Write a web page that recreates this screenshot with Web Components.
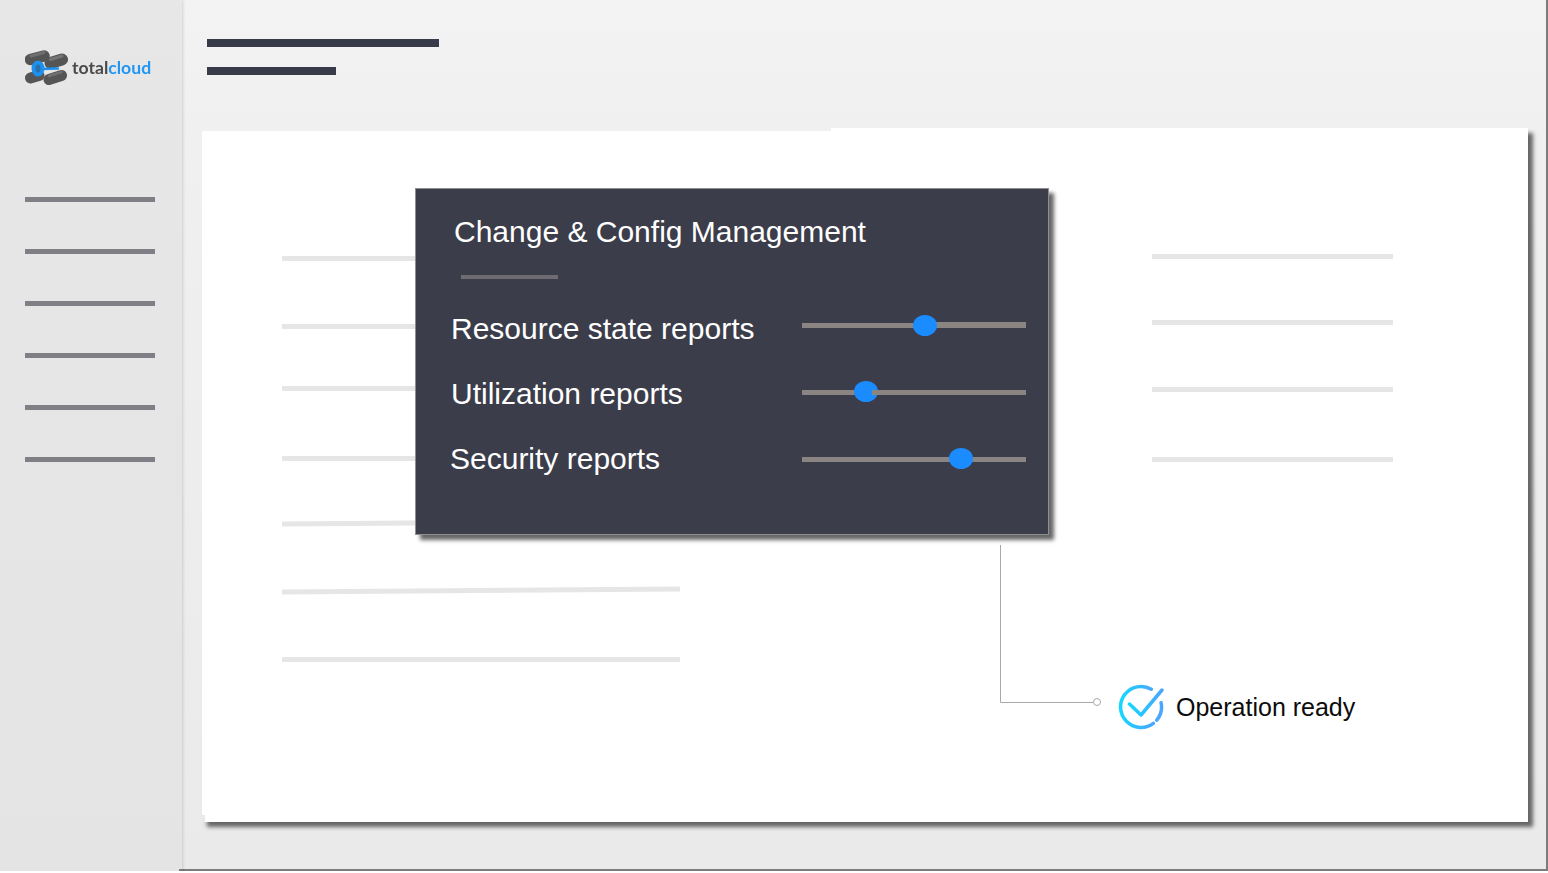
<!DOCTYPE html>
<html lang="en">
<head>
<meta charset="utf-8">
<title>totalcloud</title>
<style>
  html, body { margin: 0; padding: 0; background: #fff; }
  body { font-family: "Liberation Sans", sans-serif; overflow: hidden; }
</style>
</head>
<body>
<tc-app>
  <tc-sidebar slot="sidebar">
    <tc-logo></tc-logo>
  </tc-sidebar>
  <tc-header slot="header"></tc-header>
  <tc-card slot="card">
    <tc-line slot="left" style="margin-top:128px;--len:398px;--h:5px"></tc-line>
    <tc-line slot="left" style="margin-top:63px;--len:398px;--h:5px"></tc-line>
    <tc-line slot="left" style="margin-top:57px;--len:398px;--h:5px"></tc-line>
    <tc-line slot="left" style="margin-top:65px;--len:398px;--h:5px"></tc-line>
    <tc-line slot="left" style="margin-top:59px;--len:398px;--h:5px;--tilt:-.45deg"></tc-line>
    <tc-line slot="left" style="margin-top:63px;--len:398px;--h:5px;--tilt:-.45deg"></tc-line>
    <tc-line slot="left" style="margin-top:64px;--len:398px;--h:5px"></tc-line>
    <tc-line slot="right" style="margin-top:126px;--len:241px;--h:5px"></tc-line>
    <tc-line slot="right" style="margin-top:61px;--len:241px;--h:5px"></tc-line>
    <tc-line slot="right" style="margin-top:62px;--len:241px;--h:5px"></tc-line>
    <tc-line slot="right" style="margin-top:65px;--len:241px;--h:5px"></tc-line>
    <tc-status slot="right" style="margin-top:222px;margin-left:-34px">Operation ready</tc-status>
    <tc-panel slot="overlay" heading="Change &amp; Config Management">
      <tc-slider value="55" step="-1" kink="124" style="--track-top:14px;--knob-top:-8px">Resource state reports</tc-slider>
      <tc-slider value="28.9" step="0" kink="70" style="--track-top:16px;--knob-top:-9px">Utilization reports</tc-slider>
      <tc-slider value="71" style="--track-top:18px;--knob-top:-9px;--label-x:-1px">Security reports</tc-slider>
    </tc-panel>
    <tc-connector slot="overlay"></tc-connector>
  </tc-card>
</tc-app>

<script>
// page shell: sidebar on the left, header and card on the right
class TcApp extends HTMLElement {
  constructor() {
    super();
    this.attachShadow({ mode: "open" }).innerHTML = `
      <style>
        :host { display: flex; width: 1548px; height: 871px; }
        .main {
          flex: 1;
          display: flex;
          flex-direction: column;
          background: linear-gradient(#f3f3f3, #f0f0f0 15%, #eaeaea);
          border-right: 2px solid #7c7c7c;
          border-bottom: 2px solid #7c7c7c;
          padding-left: 20px;
          padding-right: 18px;
          box-sizing: border-box;
        }
      </style>
      <slot name="sidebar"></slot>
      <div class="main">
        <slot name="header"></slot>
        <slot name="card"></slot>
      </div>`;
  }
}

class TcSidebar extends HTMLElement {
  constructor() {
    super();
    let bars = "";
    for (let i = 0; i < 6; i++) bars += `<div class="bar"></div>`;
    this.attachShadow({ mode: "open" }).innerHTML = `
      <style>
        :host {
          display: block;
          flex: none;
          width: 182px;
          height: 873px;
          box-sizing: border-box;
          padding: 48px 0 0 25px;
          background: linear-gradient(#e7e7e7, #e4e4e4);
          box-shadow: 1px 0 3px rgba(0,0,0,.14);
          position: relative;
        }
        /* page's bottom rule starts a little inside the sidebar */
        :host::after {
          content: "";
          position: absolute;
          left: 179px;
          top: 869px;
          width: 3px;
          height: 2px;
          background: #7c7c7c;
        }
        .bars { display: flex; flex-direction: column; gap: 47px; margin-top: 111px; }
        .bar { width: 130px; height: 5px; background: #7f7f85; }
      </style>
      <slot></slot>
      <div class="bars">${bars}</div>`;
  }
}

// logo mark is four grey rods with a blue pipe through the middle
class TcLogo extends HTMLElement {
  constructor() {
    super();
    this.attachShadow({ mode: "open" }).innerHTML = `
      <style>
        :host { display: flex; align-items: center; height: 38px; gap: 4px; }
        svg { display: block; flex: none; filter: blur(.6px); }
        span {
          font: 700 17.6px/1 "Lato", "Open Sans", sans-serif;
          color: #4a4a4a;
          margin-top: 2px;
          filter: blur(.3px);
        }
        b { font-weight: 700; color: #2196f3; }
      </style>
      <svg width="43" height="38" viewBox="0 0 43 38">
        <g fill="none" stroke-linecap="round">
          <path d="M5.5 11.5 L19 8" stroke="#555" stroke-width="11.5"/>
          <path d="M6 8 L19 4.5" stroke="#6f6f6f" stroke-width="3"/>
          <path d="M5.5 30 L14 27.5" stroke="#555" stroke-width="11"/>
          <path d="M25.5 15 L37 11.5" stroke="#555" stroke-width="12"/>
          <path d="M25.5 11.5 L37 8" stroke="#757575" stroke-width="3"/>
          <path d="M14 21 L33 20.5" stroke="#1e90ee" stroke-width="2.5"/>
          <ellipse cx="13" cy="20.5" rx="4.5" ry="6" stroke="#1e90ee" stroke-width="4" fill="#2b6ea8"/>
          <path d="M24 31.5 L36.5 27.5" stroke="#555" stroke-width="11"/>
          <path d="M24 28 L36.5 24" stroke="#707070" stroke-width="2.5"/>
        </g>
      </svg>
      <span>total<b>cloud</b></span>`;
  }
}

class TcHeader extends HTMLElement {
  constructor() {
    super();
    this.attachShadow({ mode: "open" }).innerHTML = `
      <style>
        :host {
          display: flex;
          flex-direction: column;
          gap: 20px;
          flex: none;
          height: 128px;
          box-sizing: border-box;
          padding: 39px 0 0 5px;
        }
        div { height: 8px; background: #383b49; }
        .a { width: 232px; }
        .b { width: 129px; }
      </style>
      <div class="a"></div>
      <div class="b"></div>`;
  }
}

class TcCard extends HTMLElement {
  constructor() {
    super();
    this.attachShadow({ mode: "open" }).innerHTML = `
      <style>
        :host {
          display: flex;
          position: relative;
          flex: none;
          width: 1326px;
          height: 694px;
          background: #fff;
          box-shadow: 5px 5px 4px #666;
        }
        /* the white sheet sits 3px lower left of x=831 */
        :host::before {
          content: "";
          position: absolute;
          left: 0;
          top: 0;
          width: 629px;
          height: 3px;
          background: #f0f0f0;
        }
        /* notch at the bottom left corner */
        :host::after {
          content: "";
          position: absolute;
          left: 0;
          bottom: 0;
          width: 3px;
          height: 7px;
          background: #e9e9e9;
        }
        .col { display: flex; flex-direction: column; }
        .left { width: 870px; margin-left: 80px; }
      </style>
      <div class="col left"><slot name="left"></slot></div>
      <div class="col right"><slot name="right"></slot></div>
      <slot name="overlay"></slot>`;
  }
}

class TcLine extends HTMLElement {
  constructor() {
    super();
    this.attachShadow({ mode: "open" }).innerHTML = `
      <style>
        :host {
          display: block;
          width: var(--len, 100px);
          height: var(--h, 4px);
          background: #e6e6e6;
          transform: rotate(var(--tilt, 0deg));
          flex: none;
        }
      </style>`;
  }
}

// dark settings panel that floats over the card
class TcPanel extends HTMLElement {
  constructor() {
    super();
    this.attachShadow({ mode: "open" }).innerHTML = `
      <style>
        :host {
          display: block;
          position: absolute;
          left: 213px;
          top: 60px;
          width: 634px;
          height: 347px;
          box-sizing: border-box;
          background: #3c3d4a;
          border: 1px solid #8f8f8f;
          box-shadow: 5px 5px 4px #666;
          color: #fff;
          padding: 26px 22px 0 35px;
        }
        h2 {
          margin: 0 0 0 3px;
          font: 400 30px/34px "Liberation Sans", sans-serif;
        }
        .rule { width: 97px; height: 4px; background: #6e6c71; margin: 26px 0 0 10px; }
        .rows { display: flex; flex-direction: column; gap: 25px; margin-top: 30px; }
      </style>
      <h2></h2>
      <div class="rule"></div>
      <div class="rows"><slot></slot></div>`;
    this.shadowRoot.querySelector("h2").textContent = this.getAttribute("heading");
  }
}

class TcSlider extends HTMLElement {
  constructor() {
    super();
    this.attachShadow({ mode: "open" }).innerHTML = `
      <style>
        :host {
          display: flex;
          align-items: flex-start;
          justify-content: space-between;
          height: 40px;
        }
        .label {
          font: 400 30px/40px "Liberation Sans", sans-serif;
          transform: translateX(var(--label-x, 0));
          white-space: nowrap;
        }
        .track {
          position: relative;
          width: 224.5px;
          height: 5px;
          margin-top: var(--track-top, 17px);
          background: #8a8583;
          flex: none;
        }
        .knob {
          position: absolute;
          top: var(--knob-top, -8px);
          width: 24px;
          height: 21px;
          margin-left: -12px;
          border-radius: 50%;
          background: #1a8cff;
        }
        .over {
          position: absolute;
          right: 0;
          height: 5px;
          background: #8a8583;
        }
      </style>
      <div class="label"><slot></slot></div>
      <div class="track"><div class="knob"></div></div>`;
    let v = parseFloat(this.getAttribute("value"));
    this.shadowRoot.querySelector(".knob").style.left = v + "%";
    if (this.hasAttribute("kink")) {
      // the traced line isn't straight: right part is a separate piece, a px off
      let o = document.createElement("div");
      o.className = "over";
      o.style.left = this.getAttribute("kink") + "px";
      o.style.top = this.getAttribute("step") + "px";
      if (v < 50) this.shadowRoot.querySelector(".track").appendChild(o);
      else this.shadowRoot.querySelector(".track").prepend(o);
    }
  }
}

class TcConnector extends HTMLElement {
  constructor() {
    super();
    this.attachShadow({ mode: "open" }).innerHTML = `
      <style>
        :host { display: block; position: absolute; left: 797px; top: 416px; width: 106px; height: 164px; }
        svg { display: block; }
      </style>
      <svg width="106" height="164" viewBox="0 0 106 164" fill="none">
        <path d="M1.5 1 V158.5 H94" stroke="#a9a9a9" stroke-width="1"/>
        <circle cx="98" cy="158" r="3.5" stroke="#a9a9a9" stroke-width="1" fill="#fff"/>
      </svg>`;
  }
}

class TcStatus extends HTMLElement {
  constructor() {
    super();
    this.attachShadow({ mode: "open" }).innerHTML = `
      <style>
        :host {
          display: flex;
          align-items: center;
          gap: 12px;
          height: 46px;
          font: 400 25px/46px "Liberation Sans", sans-serif;
          color: #0c0c0c;
          white-space: nowrap;
        }
        svg { display: block; flex: none; }
      </style>
      <svg width="46" height="46" viewBox="0 0 46 46" fill="none" stroke-linecap="round" stroke-linejoin="round">
        <defs>
          <linearGradient id="g" x1="0" y1="0" x2="1" y2="0">
            <stop offset="0" stop-color="#16d6ff"/>
            <stop offset="1" stop-color="#4aa6ff"/>
          </linearGradient>
        </defs>
        <path d="M33.3 5.2 A20.5 20.5 0 1 0 35.3 39.4" stroke="url(#g)" stroke-width="3.5"/>
        <path d="M43.1 18.8 A20.5 20.5 0 0 1 38.8 36.1" stroke="#4aa6ff" stroke-width="3.5"/>
        <path d="M11.5 20 L23 31 L44 6" stroke="url(#g)" stroke-width="3.5"/>
      </svg>
      <span><slot></slot></span>`;
  }
}

customElements.define("tc-app", TcApp);
customElements.define("tc-sidebar", TcSidebar);
customElements.define("tc-logo", TcLogo);
customElements.define("tc-header", TcHeader);
customElements.define("tc-card", TcCard);
customElements.define("tc-line", TcLine);
customElements.define("tc-panel", TcPanel);
customElements.define("tc-slider", TcSlider);
customElements.define("tc-connector", TcConnector);
customElements.define("tc-status", TcStatus);
</script>
</body>
</html>
